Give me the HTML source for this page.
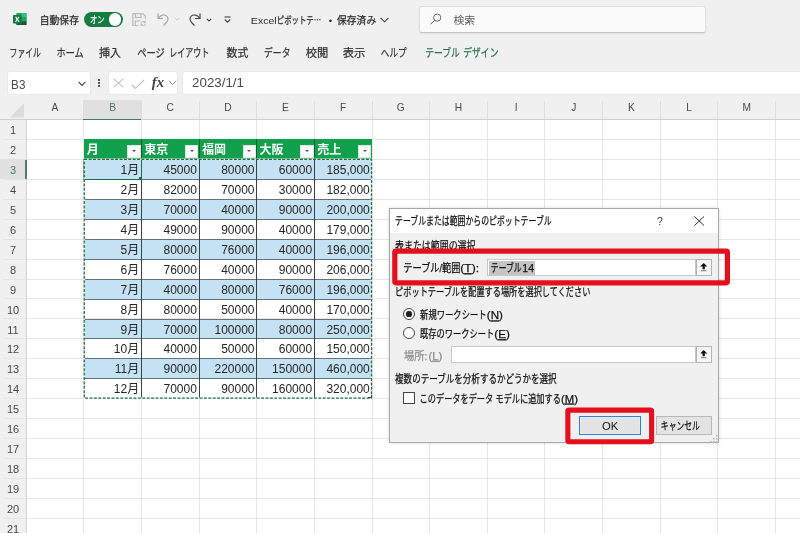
<!DOCTYPE html><html lang="ja"><head><meta charset="utf-8"><title>Excel</title><style>
html,body{margin:0;padding:0;}
body{width:800px;height:533px;overflow:hidden;background:#fff;position:relative;font-family:"Liberation Sans","Noto Sans CJK JP",sans-serif;color:#222;}
.abs{position:absolute;}
svg.txt{position:absolute;left:0;top:0;will-change:transform;font-family:"Liberation Sans","Noto Sans CJK JP",sans-serif;pointer-events:none;}
#top{position:absolute;left:0;top:0;width:800px;height:98px;background:#f0f0f0;}
#colhdr{position:absolute;left:0;top:98px;width:800px;height:21.500px;background:#f0f0f0;border-bottom:1px solid #cfcfcf;box-sizing:border-box;}
.cb{position:absolute;top:3px;width:1px;height:18px;background:#dedede;}
#rowhdr{position:absolute;left:0;top:119.500px;width:26.900px;height:414px;background:#f0f0f0;border-right:1px solid #d2d2d2;box-sizing:border-box;}
.vl{position:absolute;width:1px;background:#e6e6e6;top:119.500px;height:414px;}
.hl{position:absolute;height:1px;background:#e6e6e6;left:27px;width:773px;}
.cell{position:absolute;box-sizing:border-box;border-right:1px solid #333;border-bottom:1px solid #333;}
.band{background:#c4e2f4;}
.th{position:absolute;box-sizing:border-box;background:#11a04b;}
.dd{position:absolute;background:#fdfdfd;border:1px solid #e4e4e4;box-sizing:border-box;}
.dd:after{content:"";position:absolute;left:3.500px;top:4.800px;border-left:2.200px solid transparent;border-right:2.200px solid transparent;border-top:2.600px solid #555;}
#dlg{position:absolute;background:#f0f0f0;border:1px solid #a8a8a8;box-sizing:border-box;box-shadow:0 0 4px rgba(0,0,0,.13);}
.red{position:absolute;box-sizing:border-box;border:5px solid #e61f2a;border-radius:3px;}
.btn{position:absolute;box-sizing:border-box;background:#e1e1e1;border:1px solid #adadad;}
</style></head><body>
<div id="top">
<svg class="abs" style="left:13.250px;top:12.800px" width="13.500" height="12.500" viewBox="0 0 27 25"><rect x="7" y="0" width="20" height="25" rx="2" fill="#21a366"/><rect x="17" y="0" width="10" height="8.300" fill="#33c481"/><rect x="7" y="0" width="10" height="8.300" fill="#21a366"/><rect x="17" y="8.300" width="10" height="8.400" fill="#21a366"/><rect x="7" y="8.300" width="10" height="8.400" fill="#107c41"/><path d="M7 16.700h20v6.300a2 2 0 0 1-2 2h-16a2 2 0 0 1-2-2z" fill="#185c37"/><rect x="0" y="4" width="17" height="17" rx="1.800" fill="#107c41"/><path d="M4 7.500h2.900l1.700 3.300 1.800-3.300h2.700l-3 5 3.100 5h-2.900l-1.800-3.400-1.800 3.400h-2.800l3.100-5z" fill="#fff"/></svg>
<div class="abs" style="left:84.200px;top:11.800px;width:38.600px;height:15.700px;border-radius:8px;background:#167c40"></div>
<div class="abs" style="left:108.600px;top:13.300px;width:12.600px;height:12.600px;border-radius:50%;background:#fff"></div>
<svg class="abs" style="left:132.200px;top:12.700px" width="14.500" height="13.500" viewBox="0 0 14.500 13.500" fill="none" stroke="#b4b4b4" stroke-width="1.100"><path d="M13.300 6v-3l-2.300-2.300h-10.200v12h6"/><path d="M3.500 0.700v3.800h5.500v-3.800"/><path d="M3.300 12.700v-4.700h5"/><path d="M9 10.500a2.300 2.300 0 0 1 4.200-1.100M13.500 10.800a2.300 2.300 0 0 1-4.200 1.100M13.300 7.800v1.800h-1.700M9.200 13.300v-1.700h1.700" stroke-width="0.900"/></svg>
<svg class="abs" style="left:155.700px;top:12.300px" width="16" height="15" viewBox="0 0 16 15" fill="none" stroke="#a6a6a6" stroke-width="1.200"><path d="M2 1.500v5h5"/><path d="M2.300 6.300c2-3.300 6-4.300 8.500-2.200 2.300 2.100 1.400 5.400-3.300 9.400"/></svg>
<svg class="abs" style="left:174.200px;top:17.300px" width="6" height="4.500" viewBox="0 0 6 4.500" fill="none" stroke="#c8c8c8" stroke-width="1"><path d="M0.700 0.800l2.300 2.300 2.300-2.300"/></svg>
<svg class="abs" style="left:186px;top:12.300px" width="16" height="15" viewBox="0 0 16 15" fill="none" stroke="#444" stroke-width="1.200"><path d="M14 1.500v5h-5"/><path d="M13.700 6.300c-2-3.300-6-4.300-8.500-2.200-2.300 2.100-1.400 5.400 3.300 9.400"/></svg>
<svg class="abs" style="left:206px;top:17.500px" width="6" height="5" viewBox="0 0 6 5" fill="none" stroke="#444" stroke-width="1.100"><path d="M0.800 0.800l2.200 2.200 2.200-2.200"/></svg>
<svg class="abs" style="left:223.500px;top:16px" width="7" height="8" viewBox="0 0 7 8" fill="none" stroke="#444" stroke-width="1.100"><path d="M0.500 1h6"/><path d="M0.800 3.500l2.700 2.700 2.700-2.700"/></svg>
<svg class="abs" style="left:379.500px;top:17.300px" width="9" height="6" viewBox="0 0 9 6" fill="none" stroke="#444" stroke-width="1.100"><path d="M0.600 0.800l3.900 4 3.900-4"/></svg>
<div class="abs" style="left:418.500px;top:6px;width:287px;height:27px;background:#fbfbfb;border:1px solid #dedede;border-bottom-color:#c4c4c4;border-radius:3px;box-sizing:border-box;box-shadow:0 1px 2px rgba(0,0,0,.07)"></div>
<svg class="abs" style="left:430px;top:13.100px" width="12" height="12" viewBox="0 0 12 12" fill="none" stroke="#666" stroke-width="1"><circle cx="7.200" cy="4.600" r="3.600"/><path d="M4.600 7.300l-3.900 4"/></svg>
<div class="abs" style="left:7px;top:71px;width:83.500px;height:23.500px;background:#fff;border-radius:3px;border:1px solid #e9e9e9;box-sizing:border-box;"></div>
<svg class="abs" style="left:78px;top:80.500px" width="8" height="6" viewBox="0 0 8 6" fill="none" stroke="#444" stroke-width="1.100"><path d="M0.600 0.800l3.400 3.600 3.400-3.600"/></svg>
<div class="abs" style="left:98px;top:78.500px;width:2px;height:2px;background:#555;box-shadow:0 3px 0 #555,0 6px 0 #555"></div>
<div class="abs" style="left:108px;top:71px;width:70px;height:23.500px;background:#fff;border-radius:3px;border:1px solid #e9e9e9;box-sizing:border-box;"></div>
<svg class="abs" style="left:112.500px;top:78px" width="11" height="10" viewBox="0 0 11 10" fill="none" stroke="#c2c2c2" stroke-width="1.100"><path d="M0.800 0.800l9.400 8.400M10.200 0.800l-9.400 8.400"/></svg>
<svg class="abs" style="left:130.700px;top:78.500px" width="14" height="10.500" viewBox="0 0 14 10" fill="none" stroke="#c2c2c2" stroke-width="1.100"><path d="M0.800 5.500l3.700 3.700 8.700-8.700"/></svg>
<svg class="abs" style="left:167.800px;top:80.400px" width="9" height="6" viewBox="0 0 9 6" fill="none" stroke="#8e8e8e" stroke-width="1"><path d="M0.800 0.800l3.700 3.700 3.700-3.700"/></svg>
<div class="abs" style="left:182px;top:71px;width:620px;height:23.500px;background:#fff;border-radius:3px 0 0 3px;border:1px solid #e9e9e9;box-sizing:border-box;"></div>
</div>
<div id="colhdr">
<svg class="abs" style="left:10px;top:5px" width="14" height="14.500" viewBox="0 0 14 14.500"><path d="M14 0v14.500h-14z" fill="#dcdcdc"/></svg>
<div class="abs" style="left:83.45px;top:2.250px;width:58.05px;height:19.500px;background:#e0e0e0;border-bottom:1.300px solid #3f7d5c;box-sizing:border-box"></div>
<div class="cb" style="left:83.25px"></div>
<div class="cb" style="left:140.9px"></div>
<div class="cb" style="left:198.55px"></div>
<div class="cb" style="left:256.2px"></div>
<div class="cb" style="left:313.85px"></div>
<div class="cb" style="left:371.5px"></div>
<div class="cb" style="left:429.15px"></div>
<div class="cb" style="left:486.8px"></div>
<div class="cb" style="left:544.45px"></div>
<div class="cb" style="left:602.1px"></div>
<div class="cb" style="left:659.75px"></div>
<div class="cb" style="left:717.4px"></div>
<div class="cb" style="left:775.05px"></div>
<div class="cb" style="left:832.7px"></div>
</div>
<div class="vl" style="left:83.25px"></div>
<div class="vl" style="left:140.9px"></div>
<div class="vl" style="left:198.55px"></div>
<div class="vl" style="left:256.2px"></div>
<div class="vl" style="left:313.85px"></div>
<div class="vl" style="left:371.5px"></div>
<div class="vl" style="left:429.15px"></div>
<div class="vl" style="left:486.8px"></div>
<div class="vl" style="left:544.45px"></div>
<div class="vl" style="left:602.1px"></div>
<div class="vl" style="left:659.75px"></div>
<div class="vl" style="left:717.4px"></div>
<div class="vl" style="left:775.05px"></div>
<div class="vl" style="left:832.7px"></div>
<div class="hl" style="top:138.94px"></div>
<div class="hl" style="top:158.88px"></div>
<div class="hl" style="top:178.82px"></div>
<div class="hl" style="top:198.76px"></div>
<div class="hl" style="top:218.7px"></div>
<div class="hl" style="top:238.64px"></div>
<div class="hl" style="top:258.58px"></div>
<div class="hl" style="top:278.52px"></div>
<div class="hl" style="top:298.46px"></div>
<div class="hl" style="top:318.4px"></div>
<div class="hl" style="top:338.34px"></div>
<div class="hl" style="top:358.28px"></div>
<div class="hl" style="top:378.22px"></div>
<div class="hl" style="top:398.16px"></div>
<div class="hl" style="top:418.1px"></div>
<div class="hl" style="top:438.04px"></div>
<div class="hl" style="top:457.98px"></div>
<div class="hl" style="top:477.92px"></div>
<div class="hl" style="top:497.86px"></div>
<div class="hl" style="top:517.8px"></div>
<div class="hl" style="top:537.74px"></div>
<div id="rowhdr">
<div class="abs" style="left:3px;top:19.44px;width:22px;height:1px;background:#e5e5e5"></div>
<div class="abs" style="left:3px;top:39.38px;width:22px;height:1px;background:#e5e5e5"></div>
<div class="abs" style="left:0;top:39.88px;width:26.900px;height:19.94px;background:#e1e1e1;"></div><div class="abs" style="left:25px;top:40.18px;width:1.900px;height:19.64px;background:#577a6b"></div>
<div class="abs" style="left:3px;top:59.32px;width:22px;height:1px;background:#e5e5e5"></div>
<div class="abs" style="left:3px;top:79.26px;width:22px;height:1px;background:#e5e5e5"></div>
<div class="abs" style="left:3px;top:99.2px;width:22px;height:1px;background:#e5e5e5"></div>
<div class="abs" style="left:3px;top:119.14px;width:22px;height:1px;background:#e5e5e5"></div>
<div class="abs" style="left:3px;top:139.08px;width:22px;height:1px;background:#e5e5e5"></div>
<div class="abs" style="left:3px;top:159.02px;width:22px;height:1px;background:#e5e5e5"></div>
<div class="abs" style="left:3px;top:178.96px;width:22px;height:1px;background:#e5e5e5"></div>
<div class="abs" style="left:3px;top:198.9px;width:22px;height:1px;background:#e5e5e5"></div>
<div class="abs" style="left:3px;top:218.84px;width:22px;height:1px;background:#e5e5e5"></div>
<div class="abs" style="left:3px;top:238.78px;width:22px;height:1px;background:#e5e5e5"></div>
<div class="abs" style="left:3px;top:258.72px;width:22px;height:1px;background:#e5e5e5"></div>
<div class="abs" style="left:3px;top:278.66px;width:22px;height:1px;background:#e5e5e5"></div>
<div class="abs" style="left:3px;top:298.6px;width:22px;height:1px;background:#e5e5e5"></div>
<div class="abs" style="left:3px;top:318.54px;width:22px;height:1px;background:#e5e5e5"></div>
<div class="abs" style="left:3px;top:338.48px;width:22px;height:1px;background:#e5e5e5"></div>
<div class="abs" style="left:3px;top:358.42px;width:22px;height:1px;background:#e5e5e5"></div>
<div class="abs" style="left:3px;top:378.36px;width:22px;height:1px;background:#e5e5e5"></div>
<div class="abs" style="left:3px;top:398.3px;width:22px;height:1px;background:#e5e5e5"></div>
<div class="abs" style="left:3px;top:418.24px;width:22px;height:1px;background:#e5e5e5"></div>
</div>
<div class="th" style="left:83.75px;top:139.14px;width:288.25px;height:20.24px;"></div>
<div class="dd" style="left:127.4px;top:144.7px;width:13.300px;height:13.300px"></div>
<div class="dd" style="left:185.05px;top:144.7px;width:13.300px;height:13.300px"></div>
<div class="dd" style="left:242.7px;top:144.7px;width:13.300px;height:13.300px"></div>
<div class="dd" style="left:300.35px;top:144.7px;width:13.300px;height:13.300px"></div>
<div class="dd" style="left:358px;top:144.7px;width:13.300px;height:13.300px"></div>
<div class="abs band" style="left:83.75px;top:159.38px;width:288.25px;height:19.94px"></div>
<div class="abs band" style="left:83.75px;top:199.26px;width:288.25px;height:19.94px"></div>
<div class="abs band" style="left:83.75px;top:239.14px;width:288.25px;height:19.94px"></div>
<div class="abs band" style="left:83.75px;top:279.02px;width:288.25px;height:19.94px"></div>
<div class="abs band" style="left:83.75px;top:318.9px;width:288.25px;height:19.94px"></div>
<div class="abs band" style="left:83.75px;top:358.78px;width:288.25px;height:19.94px"></div>
<div class="abs" style="left:83.75px;top:178.92px;width:288.25px;height:1px;background:#66727b"></div>
<div class="abs" style="left:83.75px;top:198.86px;width:288.25px;height:1px;background:#66727b"></div>
<div class="abs" style="left:83.75px;top:218.8px;width:288.25px;height:1px;background:#66727b"></div>
<div class="abs" style="left:83.75px;top:238.74px;width:288.25px;height:1px;background:#66727b"></div>
<div class="abs" style="left:83.75px;top:258.68px;width:288.25px;height:1px;background:#66727b"></div>
<div class="abs" style="left:83.75px;top:278.62px;width:288.25px;height:1px;background:#66727b"></div>
<div class="abs" style="left:83.75px;top:298.56px;width:288.25px;height:1px;background:#66727b"></div>
<div class="abs" style="left:83.75px;top:318.5px;width:288.25px;height:1px;background:#66727b"></div>
<div class="abs" style="left:83.75px;top:338.44px;width:288.25px;height:1px;background:#66727b"></div>
<div class="abs" style="left:83.75px;top:358.38px;width:288.25px;height:1px;background:#66727b"></div>
<div class="abs" style="left:83.75px;top:378.32px;width:288.25px;height:1px;background:#66727b"></div>
<div class="abs" style="left:141.15px;top:139.44px;width:1px;height:19.94px;background:#0b5e30"></div>
<div class="abs" style="left:141.15px;top:159.38px;width:1px;height:239.28px;background:#36424a"></div>
<div class="abs" style="left:198.8px;top:139.44px;width:1px;height:19.94px;background:#0b5e30"></div>
<div class="abs" style="left:198.8px;top:159.38px;width:1px;height:239.28px;background:#36424a"></div>
<div class="abs" style="left:256.45px;top:139.44px;width:1px;height:19.94px;background:#0b5e30"></div>
<div class="abs" style="left:256.45px;top:159.38px;width:1px;height:239.28px;background:#36424a"></div>
<div class="abs" style="left:314.1px;top:139.44px;width:1px;height:19.94px;background:#0b5e30"></div>
<div class="abs" style="left:314.1px;top:159.38px;width:1px;height:239.28px;background:#36424a"></div>
<div class="abs" style="left:83.15px;top:158.78px;width:59.05px;height:21.24px;border:1.400px solid #1c6b42;box-sizing:border-box"></div>
<svg class="abs" style="left:82.65px;top:158.23px" width="290.25" height="241.93"><rect x="1.250" y="1.250" width="287.25" height="238.93" fill="none" stroke="#fff" stroke-width="1.500"/><rect x="1.250" y="1.250" width="287.25" height="238.93" fill="none" stroke="#1c6b42" stroke-width="1.250" stroke-dasharray="3 1.400"/></svg>
<div class="abs" style="left:139.4px;top:177.32px;width:3px;height:3px;background:#1c6b42;"></div>
<div class="abs" style="left:368px;top:394.66px;width:3.800px;height:3.800px;border-right:1.600px solid #274a5e;border-bottom:1.600px solid #274a5e;box-sizing:border-box"></div>
<div id="dlg" style="left:389px;top:208px;width:330px;height:235px">
<div class="abs" style="left:0px;top:0px;width:328px;height:23.8px;box-sizing:border-box;background:#fff"></div>
<svg class="abs" style="left:303.5px;top:7px" width="10.500" height="10" viewBox="0 0 10.500 10" fill="none" stroke="#333" stroke-width="1"><path d="M0.400 0.400l9.700 9.200M10.100 0.400l-9.700 9.200"/></svg>
<div class="abs" style="left:97.3px;top:50.4px;width:209.2px;height:16.2px;box-sizing:border-box;background:#fff;border:1px solid #c8c8c8"></div>
<div class="abs" style="left:98.75px;top:51.75px;width:46.25px;height:13.75px;box-sizing:border-box;background:#c4c4c4"></div>
<div class="abs" style="left:306px;top:50.2px;width:15.8px;height:16.6px;box-sizing:border-box;background:#f7f7f7;border:1px solid #b4b4b4"></div>
<svg class="abs" style="left:310.2px;top:53.9px" width="7.400" height="9" viewBox="0 0 7.400 9"><path d="M3.700 0l3.600 3.600h-2.500v2.600h-2.200v-2.600h-2.500z" fill="#111"/><rect x="0.900" y="7.300" width="5.600" height="0.900" fill="#666"/></svg>
<div class="abs" style="left:13px;top:99px;width:12px;height:12px;box-sizing:border-box;border-radius:50%;background:#fff;border:1px solid #444"></div>
<div class="abs" style="left:16.4px;top:102.4px;width:5.2px;height:5.2px;box-sizing:border-box;border-radius:50%;background:#222"></div>
<div class="abs" style="left:13px;top:118px;width:12px;height:12px;box-sizing:border-box;border-radius:50%;background:#fff;border:1px solid #444"></div>
<div class="abs" style="left:61.2px;top:137.2px;width:245.3px;height:16.8px;box-sizing:border-box;background:#fff;border:1px solid #c8c8c8"></div>
<div class="abs" style="left:306px;top:137px;width:15.8px;height:17.2px;box-sizing:border-box;background:#f7f7f7;border:1px solid #b4b4b4"></div>
<svg class="abs" style="left:310.2px;top:140.7px" width="7.400" height="9" viewBox="0 0 7.400 9"><path d="M3.700 0l3.600 3.600h-2.500v2.600h-2.200v-2.600h-2.500z" fill="#111"/><rect x="0.900" y="7.300" width="5.600" height="0.900" fill="#666"/></svg>
<div class="abs" style="left:13px;top:183px;width:11.6px;height:11.8px;box-sizing:border-box;background:#fff;border:1px solid #444"></div>
<div class="abs" style="left:189px;top:207px;width:62px;height:19px;box-sizing:border-box;background:#e3e3e3;border:1px solid #2b84d8;box-shadow:inset 0 0 0 1px #e9e9e9"></div>
<div class="abs" style="left:266px;top:207px;width:56px;height:19px;box-sizing:border-box;background:#e3e3e3;border:1px solid #b8b8b8"></div>
<svg class="abs" style="left:319.5px;top:225.5px" width="9" height="9" viewBox="0 0 9 9" fill="#b8b8b8"><rect x="6" y="0" width="1.500" height="1.500"/><rect x="3" y="3" width="1.500" height="1.500"/><rect x="6" y="3" width="1.500" height="1.500"/><rect x="0" y="6" width="1.500" height="1.500"/><rect x="3" y="6" width="1.500" height="1.500"/><rect x="6" y="6" width="1.500" height="1.500"/></svg>
</div>
<svg class="txt" width="800" height="533" viewBox="0 0 800 533">
<text x="39.85" y="23.5" font-size="9.8" fill="#2a2a2a" textLength="39.05" lengthAdjust="spacingAndGlyphs" stroke="#2a2a2a" stroke-width="0.25">自動保存</text>
<text x="89.9" y="23.4" font-size="9.5" fill="#fff" textLength="14.8" lengthAdjust="spacingAndGlyphs" stroke="#fff" stroke-width="0.25">オン</text>
<text x="250.85" y="23.8" font-size="9.8" fill="#2a2a2a" textLength="25.8" lengthAdjust="spacingAndGlyphs">Excel</text>
<text x="276.8" y="23.8" font-size="9.8" fill="#2a2a2a" textLength="44.35" lengthAdjust="spacingAndGlyphs" stroke="#2a2a2a" stroke-width="0.25">ピボットテ<tspan font-family="Noto Sans CJK JP">…</tspan></text>
<text x="330.5" y="23.8" font-size="9.8" fill="#2a2a2a" text-anchor="middle">•</text>
<text x="337.1" y="23.8" font-size="9.8" fill="#2a2a2a" textLength="39.05" lengthAdjust="spacingAndGlyphs" stroke="#2a2a2a" stroke-width="0.25">保存済み</text>
<text x="453.4" y="23.9" font-size="10" fill="#5a5a5a" textLength="21.8" lengthAdjust="spacingAndGlyphs">検索</text>
<text x="9.6" y="57.1" font-size="11.5" fill="#333" textLength="31.3" lengthAdjust="spacingAndGlyphs" stroke="#333" stroke-width="0.25">ファイル</text>
<text x="56.6" y="57.1" font-size="11.5" fill="#333" textLength="27.05" lengthAdjust="spacingAndGlyphs" stroke="#333" stroke-width="0.25">ホーム</text>
<text x="99.1" y="57.1" font-size="11.5" fill="#333" textLength="22.05" lengthAdjust="spacingAndGlyphs" stroke="#333" stroke-width="0.25">挿入</text>
<text x="137.2" y="57.1" font-size="11.5" fill="#333" textLength="27.6" lengthAdjust="spacingAndGlyphs" stroke="#333" stroke-width="0.25">ページ</text>
<text x="169.2" y="57.1" font-size="11.5" fill="#333" textLength="40.2" lengthAdjust="spacingAndGlyphs" stroke="#333" stroke-width="0.25">レイアウト</text>
<text x="226.6" y="57.1" font-size="11.5" fill="#333" textLength="21.8" lengthAdjust="spacingAndGlyphs" stroke="#333" stroke-width="0.25">数式</text>
<text x="264.1" y="57.1" font-size="11.5" fill="#333" textLength="26.3" lengthAdjust="spacingAndGlyphs" stroke="#333" stroke-width="0.25">データ</text>
<text x="305.85" y="57.1" font-size="11.5" fill="#333" textLength="22.55" lengthAdjust="spacingAndGlyphs" stroke="#333" stroke-width="0.25">校閲</text>
<text x="342.85" y="57.1" font-size="11.5" fill="#333" textLength="22.55" lengthAdjust="spacingAndGlyphs" stroke="#333" stroke-width="0.25">表示</text>
<text x="380.85" y="57.1" font-size="11.5" fill="#333" textLength="25.8" lengthAdjust="spacingAndGlyphs" stroke="#333" stroke-width="0.25">ヘルプ</text>
<text x="425.35" y="57.1" font-size="11.5" fill="#2a7250" textLength="34.55" lengthAdjust="spacingAndGlyphs" stroke="#2a7250" stroke-width="0.25">テーブル</text>
<text x="463.35" y="57.1" font-size="11.5" fill="#2a7250" textLength="35.05" lengthAdjust="spacingAndGlyphs" stroke="#2a7250" stroke-width="0.25">デザイン</text>
<text x="11.1" y="88.9" font-size="12.5" fill="#4a4a4a" textLength="14.3" lengthAdjust="spacingAndGlyphs">B3</text>
<text x="151.800" y="86.900" font-size="15" font-family="Liberation Serif,serif" font-style="italic" font-weight="bold" fill="#444" textLength="12.200" lengthAdjust="spacingAndGlyphs">fx</text>
<text x="192.1" y="87" font-size="12.3" fill="#4a4a4a" textLength="51.8" lengthAdjust="spacingAndGlyphs">2023/1/1</text>
<text x="54.92" y="110.6" font-size="10.2" fill="#4a4a4a" text-anchor="middle">A</text>
<text x="112.58" y="110.6" font-size="10.2" fill="#47786a" text-anchor="middle">B</text>
<text x="170.22" y="110.6" font-size="10.2" fill="#4a4a4a" text-anchor="middle">C</text>
<text x="227.87" y="110.6" font-size="10.2" fill="#4a4a4a" text-anchor="middle">D</text>
<text x="285.52" y="110.6" font-size="10.2" fill="#4a4a4a" text-anchor="middle">E</text>
<text x="343.18" y="110.6" font-size="10.2" fill="#4a4a4a" text-anchor="middle">F</text>
<text x="400.82" y="110.6" font-size="10.2" fill="#4a4a4a" text-anchor="middle">G</text>
<text x="458.48" y="110.6" font-size="10.2" fill="#4a4a4a" text-anchor="middle">H</text>
<text x="516.12" y="110.6" font-size="10.2" fill="#4a4a4a" text-anchor="middle">I</text>
<text x="573.78" y="110.6" font-size="10.2" fill="#4a4a4a" text-anchor="middle">J</text>
<text x="631.43" y="110.6" font-size="10.2" fill="#4a4a4a" text-anchor="middle">K</text>
<text x="689.08" y="110.6" font-size="10.2" fill="#4a4a4a" text-anchor="middle">L</text>
<text x="746.73" y="110.6" font-size="10.2" fill="#4a4a4a" text-anchor="middle">M</text>
<text x="804.38" y="110.6" font-size="10.2" fill="#4a4a4a" text-anchor="middle">N</text>
<text x="13" y="134.1" font-size="11" fill="#4a4a4a" text-anchor="middle">1</text>
<text x="13" y="154.04" font-size="11" fill="#4a4a4a" text-anchor="middle">2</text>
<text x="13" y="173.98" font-size="11" fill="#47786a" text-anchor="middle">3</text>
<text x="13" y="193.92" font-size="11" fill="#4a4a4a" text-anchor="middle">4</text>
<text x="13" y="213.86" font-size="11" fill="#4a4a4a" text-anchor="middle">5</text>
<text x="13" y="233.8" font-size="11" fill="#4a4a4a" text-anchor="middle">6</text>
<text x="13" y="253.74" font-size="11" fill="#4a4a4a" text-anchor="middle">7</text>
<text x="13" y="273.68" font-size="11" fill="#4a4a4a" text-anchor="middle">8</text>
<text x="13" y="293.62" font-size="11" fill="#4a4a4a" text-anchor="middle">9</text>
<text x="13" y="313.56" font-size="11" fill="#4a4a4a" text-anchor="middle">10</text>
<text x="13" y="333.5" font-size="11" fill="#4a4a4a" text-anchor="middle">11</text>
<text x="13" y="353.44" font-size="11" fill="#4a4a4a" text-anchor="middle">12</text>
<text x="13" y="373.38" font-size="11" fill="#4a4a4a" text-anchor="middle">13</text>
<text x="13" y="393.32" font-size="11" fill="#4a4a4a" text-anchor="middle">14</text>
<text x="13" y="413.26" font-size="11" fill="#4a4a4a" text-anchor="middle">15</text>
<text x="13" y="433.2" font-size="11" fill="#4a4a4a" text-anchor="middle">16</text>
<text x="13" y="453.14" font-size="11" fill="#4a4a4a" text-anchor="middle">17</text>
<text x="13" y="473.08" font-size="11" fill="#4a4a4a" text-anchor="middle">18</text>
<text x="13" y="493.02" font-size="11" fill="#4a4a4a" text-anchor="middle">19</text>
<text x="13" y="512.96" font-size="11" fill="#4a4a4a" text-anchor="middle">20</text>
<text x="13" y="532.9" font-size="11" fill="#4a4a4a" text-anchor="middle">21</text>
<text x="86.65" y="154.34" font-size="12" fill="#fff" font-weight="bold" text-anchor="start">月</text>
<text x="144.3" y="154.34" font-size="12" fill="#fff" font-weight="bold" text-anchor="start">東京</text>
<text x="201.95" y="154.34" font-size="12" fill="#fff" font-weight="bold" text-anchor="start">福岡</text>
<text x="259.6" y="154.34" font-size="12" fill="#fff" font-weight="bold" text-anchor="start">大阪</text>
<text x="317.25" y="154.34" font-size="12" fill="#fff" font-weight="bold" text-anchor="start">売上</text>
<text x="139.2" y="173.98" font-size="12" fill="#262626" text-anchor="end">1月</text>
<text x="196.85" y="173.98" font-size="12" fill="#262626" text-anchor="end">45000</text>
<text x="254.5" y="173.98" font-size="12" fill="#262626" text-anchor="end">80000</text>
<text x="312.15" y="173.98" font-size="12" fill="#262626" text-anchor="end">60000</text>
<text x="369.8" y="173.98" font-size="12" fill="#262626" text-anchor="end">185,000</text>
<text x="139.2" y="193.92" font-size="12" fill="#262626" text-anchor="end">2月</text>
<text x="196.85" y="193.92" font-size="12" fill="#262626" text-anchor="end">82000</text>
<text x="254.5" y="193.92" font-size="12" fill="#262626" text-anchor="end">70000</text>
<text x="312.15" y="193.92" font-size="12" fill="#262626" text-anchor="end">30000</text>
<text x="369.8" y="193.92" font-size="12" fill="#262626" text-anchor="end">182,000</text>
<text x="139.2" y="213.86" font-size="12" fill="#262626" text-anchor="end">3月</text>
<text x="196.85" y="213.86" font-size="12" fill="#262626" text-anchor="end">70000</text>
<text x="254.5" y="213.86" font-size="12" fill="#262626" text-anchor="end">40000</text>
<text x="312.15" y="213.86" font-size="12" fill="#262626" text-anchor="end">90000</text>
<text x="369.8" y="213.86" font-size="12" fill="#262626" text-anchor="end">200,000</text>
<text x="139.2" y="233.8" font-size="12" fill="#262626" text-anchor="end">4月</text>
<text x="196.85" y="233.8" font-size="12" fill="#262626" text-anchor="end">49000</text>
<text x="254.5" y="233.8" font-size="12" fill="#262626" text-anchor="end">90000</text>
<text x="312.15" y="233.8" font-size="12" fill="#262626" text-anchor="end">40000</text>
<text x="369.8" y="233.8" font-size="12" fill="#262626" text-anchor="end">179,000</text>
<text x="139.2" y="253.74" font-size="12" fill="#262626" text-anchor="end">5月</text>
<text x="196.85" y="253.74" font-size="12" fill="#262626" text-anchor="end">80000</text>
<text x="254.5" y="253.74" font-size="12" fill="#262626" text-anchor="end">76000</text>
<text x="312.15" y="253.74" font-size="12" fill="#262626" text-anchor="end">40000</text>
<text x="369.8" y="253.74" font-size="12" fill="#262626" text-anchor="end">196,000</text>
<text x="139.2" y="273.68" font-size="12" fill="#262626" text-anchor="end">6月</text>
<text x="196.85" y="273.68" font-size="12" fill="#262626" text-anchor="end">76000</text>
<text x="254.5" y="273.68" font-size="12" fill="#262626" text-anchor="end">40000</text>
<text x="312.15" y="273.68" font-size="12" fill="#262626" text-anchor="end">90000</text>
<text x="369.8" y="273.68" font-size="12" fill="#262626" text-anchor="end">206,000</text>
<text x="139.2" y="293.62" font-size="12" fill="#262626" text-anchor="end">7月</text>
<text x="196.85" y="293.62" font-size="12" fill="#262626" text-anchor="end">40000</text>
<text x="254.5" y="293.62" font-size="12" fill="#262626" text-anchor="end">80000</text>
<text x="312.15" y="293.62" font-size="12" fill="#262626" text-anchor="end">76000</text>
<text x="369.8" y="293.62" font-size="12" fill="#262626" text-anchor="end">196,000</text>
<text x="139.2" y="313.56" font-size="12" fill="#262626" text-anchor="end">8月</text>
<text x="196.85" y="313.56" font-size="12" fill="#262626" text-anchor="end">80000</text>
<text x="254.5" y="313.56" font-size="12" fill="#262626" text-anchor="end">50000</text>
<text x="312.15" y="313.56" font-size="12" fill="#262626" text-anchor="end">40000</text>
<text x="369.8" y="313.56" font-size="12" fill="#262626" text-anchor="end">170,000</text>
<text x="139.2" y="333.5" font-size="12" fill="#262626" text-anchor="end">9月</text>
<text x="196.85" y="333.5" font-size="12" fill="#262626" text-anchor="end">70000</text>
<text x="254.5" y="333.5" font-size="12" fill="#262626" text-anchor="end">100000</text>
<text x="312.15" y="333.5" font-size="12" fill="#262626" text-anchor="end">80000</text>
<text x="369.8" y="333.5" font-size="12" fill="#262626" text-anchor="end">250,000</text>
<text x="139.2" y="353.44" font-size="12" fill="#262626" text-anchor="end">10月</text>
<text x="196.85" y="353.44" font-size="12" fill="#262626" text-anchor="end">40000</text>
<text x="254.5" y="353.44" font-size="12" fill="#262626" text-anchor="end">50000</text>
<text x="312.15" y="353.44" font-size="12" fill="#262626" text-anchor="end">60000</text>
<text x="369.8" y="353.44" font-size="12" fill="#262626" text-anchor="end">150,000</text>
<text x="139.2" y="373.38" font-size="12" fill="#262626" text-anchor="end">11月</text>
<text x="196.85" y="373.38" font-size="12" fill="#262626" text-anchor="end">90000</text>
<text x="254.5" y="373.38" font-size="12" fill="#262626" text-anchor="end">220000</text>
<text x="312.15" y="373.38" font-size="12" fill="#262626" text-anchor="end">150000</text>
<text x="369.8" y="373.38" font-size="12" fill="#262626" text-anchor="end">460,000</text>
<text x="139.2" y="393.32" font-size="12" fill="#262626" text-anchor="end">12月</text>
<text x="196.85" y="393.32" font-size="12" fill="#262626" text-anchor="end">70000</text>
<text x="254.5" y="393.32" font-size="12" fill="#262626" text-anchor="end">90000</text>
<text x="312.15" y="393.32" font-size="12" fill="#262626" text-anchor="end">160000</text>
<text x="369.8" y="393.32" font-size="12" fill="#262626" text-anchor="end">320,000</text>
<text x="395.1" y="225.4" font-size="11" fill="#111" textLength="156.55" lengthAdjust="spacingAndGlyphs" stroke="#111" stroke-width="0.25">テーブルまたは範囲からのピボットテーブル</text>
<text x="657.1" y="225.2" font-size="11.5" fill="#333" textLength="5.8" lengthAdjust="spacingAndGlyphs">?</text>
<text x="395.1" y="250.2" font-size="11" fill="#111" textLength="80.3" lengthAdjust="spacingAndGlyphs" stroke="#111" stroke-width="0.25">表または範囲の選択</text>
<text x="403.35" y="272.2" font-size="11.5" fill="#111" textLength="57.05" lengthAdjust="spacingAndGlyphs" stroke="#111" stroke-width="0.25">テーブル/範囲</text>
<text x="460.3" y="272.2" font-size="11.5" fill="#111" textLength="18.85" lengthAdjust="spacingAndGlyphs" stroke="#111" stroke-width="0.25">(<tspan text-decoration="underline">T</tspan>):</text>
<text x="490.85" y="272.2" font-size="11.5" fill="#111" textLength="30.8" lengthAdjust="spacingAndGlyphs" stroke="#111" stroke-width="0.25">テーブル</text>
<text x="522.3" y="272.2" font-size="11.5" fill="#111" textLength="11.85" lengthAdjust="spacingAndGlyphs" stroke="#111" stroke-width="0.25">14</text>
<text x="395.1" y="295.6" font-size="11" fill="#111" textLength="195.3" lengthAdjust="spacingAndGlyphs" stroke="#111" stroke-width="0.25">ピボットテーブルを配置する場所を選択してください</text>
<text x="420.1" y="319.4" font-size="11" fill="#111" textLength="66.55" lengthAdjust="spacingAndGlyphs" stroke="#111" stroke-width="0.25">新規ワークシート</text>
<text x="486.8" y="319.4" font-size="11" fill="#111" textLength="16.1" lengthAdjust="spacingAndGlyphs" stroke="#111" stroke-width="0.25">(<tspan text-decoration="underline">N</tspan>)</text>
<text x="420.1" y="338.2" font-size="11" fill="#111" textLength="74.05" lengthAdjust="spacingAndGlyphs" stroke="#111" stroke-width="0.25">既存のワークシート</text>
<text x="494.3" y="338.2" font-size="11" fill="#111" textLength="15.6" lengthAdjust="spacingAndGlyphs" stroke="#111" stroke-width="0.25">(<tspan text-decoration="underline">E</tspan>)</text>
<text x="404.1" y="359.8" font-size="11" fill="#8c8c8c" textLength="23.3" lengthAdjust="spacingAndGlyphs" stroke="#8c8c8c" stroke-width="0.25">場所:</text>
<text x="428.6" y="359.8" font-size="11" fill="#8c8c8c" textLength="13.8" lengthAdjust="spacingAndGlyphs" stroke="#8c8c8c" stroke-width="0.25">(<tspan text-decoration="underline">L</tspan>)</text>
<text x="395.1" y="382.6" font-size="11" fill="#111" textLength="161.55" lengthAdjust="spacingAndGlyphs" stroke="#111" stroke-width="0.25">複数のテーブルを分析するかどうかを選択</text>
<text x="419.6" y="402.5" font-size="11" fill="#111" textLength="141.3" lengthAdjust="spacingAndGlyphs" stroke="#111" stroke-width="0.25">このデータをデータ モデルに追加する</text>
<text x="561.1" y="402.5" font-size="11" fill="#111" textLength="16.8" lengthAdjust="spacingAndGlyphs" stroke="#111" stroke-width="0.25">(<tspan text-decoration="underline">M</tspan>)</text>
<text x="602.1" y="430" font-size="11" fill="#111" textLength="16.3" lengthAdjust="spacingAndGlyphs">OK</text>
<text x="660.85" y="430.2" font-size="11" fill="#111" textLength="39.05" lengthAdjust="spacingAndGlyphs" stroke="#111" stroke-width="0.25">キャンセル</text>
</svg>
<svg class="abs" style="left:0;top:0" width="800" height="533" viewBox="0 0 800 533"><rect x="394.8" y="251.15" width="332.6" height="31.65" rx="1.200" fill="none" stroke="#e50f1d" stroke-width="5.2" stroke-linejoin="round"/></svg>
<svg class="abs" style="left:0;top:0" width="800" height="533" viewBox="0 0 800 533"><rect x="567.85" y="410.1" width="83.75" height="31.65" rx="1.200" fill="none" stroke="#e50f1d" stroke-width="5.1" stroke-linejoin="round"/></svg>
</body></html>
